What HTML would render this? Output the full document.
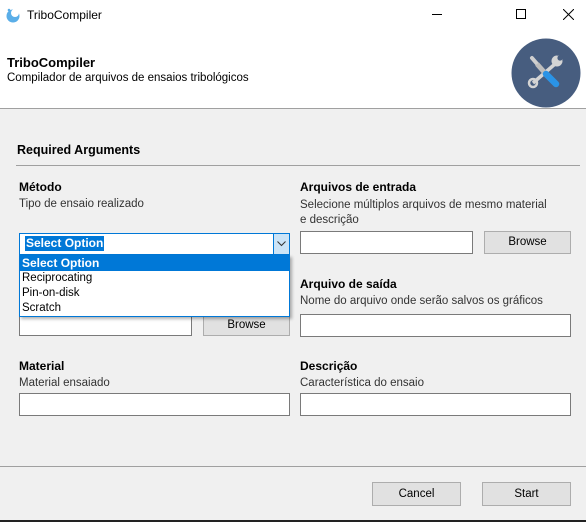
<!DOCTYPE html>
<html><head><meta charset="utf-8"><style>
*{margin:0;padding:0;box-sizing:border-box}
body{width:586px;height:522px;overflow:hidden;background:#f0f0f0;font-family:"Liberation Sans",sans-serif;font-size:11.5px;color:#000;position:relative}
.a{position:absolute}
.b{font-weight:bold;font-size:12px}
.d{color:#333;font-size:11.5px}
.in{position:absolute;background:#fff;border:1px solid #7a7a7a}
.btn{position:absolute;background:#e1e1e1;border:1px solid #adadad;text-align:center;font-size:11.5px}
</style></head><body>
<div class="a" style="left:0;top:0;width:586px;height:108px;background:#fff"></div>
<div class="a" style="left:0;top:108px;width:586px;height:1px;background:#a0a0a0"></div>
<svg class="a" style="left:5px;top:7px" width="16" height="16" viewBox="0 0 16 16"><circle cx="8" cy="9" r="6.5" fill="#5aaee8"/><circle cx="10" cy="6" r="4" fill="#fff"/><circle cx="4" cy="3" r="1.3" fill="#5aaee8"/></svg>
<div class="a" style="left:27px;top:8px;font-size:12px">TriboCompiler</div>
<div class="a" style="left:432px;top:14px;width:10px;height:1px;background:#000"></div>
<div class="a" style="left:516px;top:9px;width:10px;height:10px;border:1px solid #000"></div>
<svg class="a" style="left:563px;top:9px" width="11" height="11"><path d="M0 0L11 11M11 0L0 11" stroke="#000" stroke-width="1"/></svg>
<div class="a b" style="left:7px;top:55px;font-size:13px">TriboCompiler</div>
<div class="a" style="left:7px;top:72px;font-size:11.5px">Compilador de arquivos de ensaios tribológicos</div>
<svg class="a" style="left:511px;top:38px" width="70" height="70" viewBox="0 0 70 70"><circle cx="35" cy="35" r="34.5" fill="#475d7f"/>
<path d="M44 26L22 45" stroke="#d4d4d4" stroke-width="3.5"/>
<circle cx="22" cy="45" r="4" fill="none" stroke="#d4d4d4" stroke-width="2.5"/>
<circle cx="46" cy="23" r="5.5" fill="#d4d4d4"/><path d="M46 17L52 23L48 20Z" fill="#475d7f"/><circle cx="49" cy="20" r="2.6" fill="#475d7f"/>
<path d="M21 20L34 35" stroke="#cfcfcf" stroke-width="4" stroke-linecap="round"/>
<path d="M26 26L34 35" stroke="#bdbdbd" stroke-width="5"/>
<path d="M35 36L45 46" stroke="#2a93e6" stroke-width="6.5" stroke-linecap="round"/>
</svg>
<div class="a b" style="left:17px;top:143px;font-size:12.5px">Required Arguments</div>
<div class="a" style="left:16px;top:165px;width:564px;height:1px;background:#a0a0a0"></div>
<div class="a b" style="left:19px;top:180px">Método</div>
<div class="a d" style="left:19px;top:198px">Tipo de ensaio realizado</div>
<div class="a b" style="left:300px;top:180px">Arquivos de entrada</div>
<div class="a d" style="left:300px;top:198px;width:250px;line-height:15px">Selecione múltiplos arquivos de mesmo material e descrição</div>
<div class="in" style="left:19px;top:314px;width:173px;height:22px"></div>
<div class="btn" style="left:203px;top:314px;width:87px;height:22px;line-height:20px">Browse</div>
<div class="in" style="left:300px;top:231px;width:173px;height:23px"></div>
<div class="btn" style="left:484px;top:231px;width:87px;height:23px;line-height:21px">Browse</div>
<div class="a b" style="left:300px;top:277px">Arquivo de saída</div>
<div class="a d" style="left:300px;top:295px">Nome do arquivo onde serão salvos os gráficos</div>
<div class="in" style="left:300px;top:314px;width:271px;height:23px"></div>
<div class="a b" style="left:19px;top:359px">Material</div>
<div class="a d" style="left:19px;top:377px">Material ensaiado</div>
<div class="in" style="left:19px;top:393px;width:271px;height:23px"></div>
<div class="a b" style="left:300px;top:359px">Descrição</div>
<div class="a d" style="left:300px;top:377px">Característica do ensaio</div>
<div class="in" style="left:300px;top:393px;width:271px;height:23px"></div>
<div class="a" style="left:19px;top:233px;width:271px;height:22px;background:#fff;border:1px solid #0078d7"></div>
<div class="a" style="left:25px;top:236px;height:15px;padding:0 1px;background:#0078d7;color:#fff;font-weight:bold;font-size:12px;line-height:15px">Select Option</div>
<div class="a" style="left:273px;top:233px;width:17px;height:22px;background:#cce4f7;border:1px solid #0078d7"></div>
<svg class="a" style="left:277px;top:241px" width="9" height="6"><path d="M0.5 0.5L4.5 4.5L8.5 0.5" stroke="#333" fill="none"/></svg>
<div class="a" style="left:19px;top:255px;width:271px;height:62px;background:#fff;border:1px solid #0078d7;box-shadow:2px 2px 3px rgba(0,0,0,.3)"></div>
<div class="a" style="left:20px;top:256px;width:269px;height:15px;background:#0078d7"></div>
<div class="a" style="left:22px;top:256px;color:#fff;font-weight:bold;font-size:12px;line-height:15px">Select Option</div>
<div class="a" style="left:22px;top:271px;line-height:15px">Reciprocating</div>
<div class="a" style="left:22px;top:286px;line-height:15px">Pin-on-disk</div>
<div class="a" style="left:22px;top:301px;line-height:15px">Scratch</div>
<div class="a" style="left:0;top:466px;width:586px;height:1px;background:#a0a0a0"></div>
<div class="btn" style="left:372px;top:482px;width:89px;height:24px;line-height:22px">Cancel</div>
<div class="btn" style="left:482px;top:482px;width:89px;height:24px;line-height:22px">Start</div>
<div class="a" style="left:0;top:520px;width:586px;height:2px;background:#222"></div>
</body></html>
